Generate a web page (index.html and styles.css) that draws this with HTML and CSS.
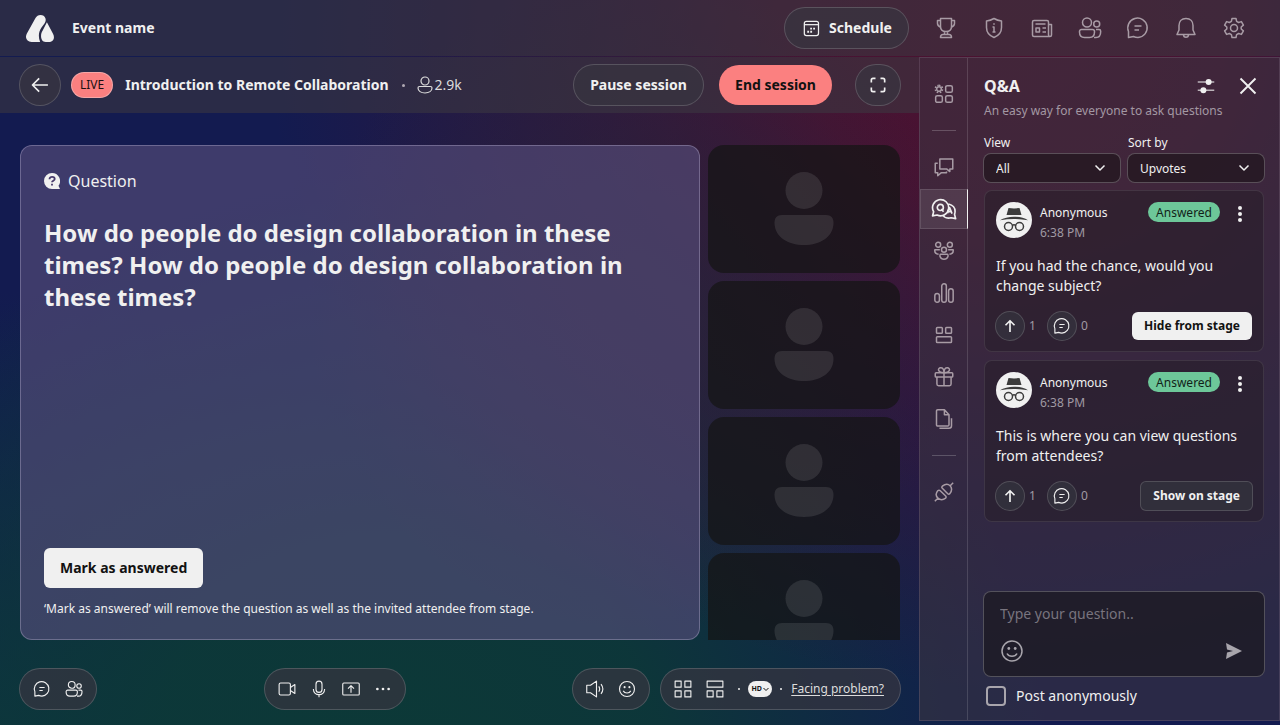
FILE: index.html
```html
<!DOCTYPE html>
<html lang="en">
<head>
    <meta charset="UTF-8">
    <meta name="viewport" content="width=device-width, initial-scale=1.0">
    <title>Event name</title>
    <link rel="stylesheet" href="styles.css">
</head>
<body>
    <!-- Shared icons -->
    <svg class="sprite" aria-hidden="true">
        <symbol id="i-chat" viewBox="0 0 24 24"><path d="M2.500 21.500v-6A9.700 9.700 0 1 1 12 21.500q-2.500 0-4.500-1Zm0 0M8.500 10h7M8.500 14H13"/></symbol>
        <symbol id="i-people" viewBox="0 0 24 24"><circle cx="9" cy="6.500" r="4.500"/><circle cx="18.700" cy="8" r="3"/><path d="M3.500 13.500h11a2 2 0 0 1 2 2v.5c0 3.500-2 5.500-5 5.500h-5c-3 0-5-2-5-5.500v-.5a2 2 0 0 1 2-2ZM18 13.500h3a1.700 1.700 0 0 1 1.700 1.700c0 4-1.500 6.300-4.700 6.300h-2"/></symbol>
        <symbol id="i-smile" viewBox="0 0 24 24"><circle cx="12" cy="12" r="10"/><path d="M7 14.500c2 3.800 8 3.800 10 0"/><circle class="dot" cx="8.800" cy="9.500" r="1.400"/><circle class="dot" cx="15.200" cy="9.500" r="1.400"/></symbol>
        <symbol id="i-up" viewBox="0 0 24 24"><path stroke-width="2.200" d="M12 20V5M6 11l6-6 6 6"/></symbol>
        <symbol id="i-person" viewBox="0 0 96 128"><circle cx="48" cy="45.500" r="18.500"/><path d="M26 70h44c5 0 7.500 3 7.500 7.500C77.500 92 64 100 48 100s-29.500-8-29.500-22.500C18.500 73 21 70 26 70Z"/></symbol>
        <symbol id="i-incognito" viewBox="0 0 36 36"><path class="dot" d="m12.500 6 5.500.5 5.500-.5 2 7h-15ZM4 18.300c7-4.700 21-4.700 28 0-9-1.700-19-1.700-28 0Z"/><circle cx="12.500" cy="24.500" r="4"/><circle cx="23.500" cy="24.500" r="4"/><path d="M16.300 23.500q1.700-1.400 3.400 0"/></symbol>
    </svg>

    <div class="app">
        <header class="topbar">
            <svg class="logo" viewBox="0 0 28 27"><path d="M14.500 0c2.600 0 4 1.200 4.800 3 .8 2 .4 3.600-.8 5.400L15.500 12.500c-3 4.200-3.400 9.500-1.400 14.500H5.500C.8 27-1.400 22.800.9 18.500L9.500 3C10.800.9 12.200 0 14.500 0Z"/><path d="M20.900 7.200 27 18.800c2.300 4.200.2 8.200-4.300 8.200h-3c-5.200 0-5.800-7.500-3-11.500Z"/></svg>
            <span class="event-name">Event name</span>
            <button class="pill schedule">
                <svg class="icon" viewBox="0 0 24 24"><rect x="4" y="4" width="17" height="17" rx="2.500"/><path d="M4 8h17"/><path stroke-width="2.200" stroke-dasharray="2.200 1.400" d="M11 12.700h7M7.500 16.500h7"/></svg>
                Schedule
            </button>
            <nav class="top-icons">
                <button aria-label="Leaderboard"><svg class="icon" viewBox="0 0 24 24"><path d="M6.500 2.500h11v8c0 3-2 5-5.500 5s-5.500-2-5.500-5ZM6.500 4.500h-3v3c0 2 1 3 3.500 4M17.500 4.500h3v3c0 2-1 3-3.500 4M10.500 15.500v3h3v-3M6.500 21.500c0-2 1-3 2.500-3h6c1.500 0 2.500 1 2.500 3Z"/></svg></button>
                <button aria-label="Info"><svg class="icon" viewBox="0 0 24 24"><path d="M12 2.500c2.500 1.500 5 2.200 7.500 2.500v6.500c0 5-2.500 8-7.500 10-5-2-7.500-5-7.500-10V5c2.500-.3 5-1 7.500-2.500ZM10.500 11H12v5m-1.500 0h3M12 7.200v1.600"/></svg></button>
                <button aria-label="News"><svg class="icon" viewBox="0 0 24 24"><path d="M20 20.500H4A1.500 1.500 0 0 1 2.500 19V6A1.500 1.500 0 0 1 4 4.500h13A1.500 1.500 0 0 1 18.500 6v13a1.500 1.500 0 0 0 3 0V8.500h-3M5.500 8h10M12.500 12h3.500M12.500 16h3.500M6 12h3.500v4H6Z"/></svg></button>
                <button aria-label="People"><svg class="icon"><use href="#i-people"/></svg></button>
                <button aria-label="Messages"><svg class="icon"><use href="#i-chat"/></svg></button>
                <button aria-label="Notifications"><svg class="icon" viewBox="0 0 24 24"><path d="M12 2.500c-4.500 0-7 3-7 7V14l-2 4.500h18L19 14V9.500c0-4-2.500-7-7-7ZM9.500 18.500c0 3.800 5 3.800 5 0"/></svg></button>
                <button aria-label="Settings"><svg class="icon" viewBox="0 0 24 24"><circle cx="12" cy="12" r="3.500"/><path d="M10 2.500h4l.6 2.900 2 1.100 2.800-.9 2 3.500-2.200 1.900v2l2.200 1.900-2 3.500-2.800-.9-2 1.100-.6 2.900h-4l-.6-2.900-2-1.100-2.800.9-2-3.500L4.800 13v-2L2.600 9.100l2-3.500 2.800.9 2-1.100Z"/></svg></button>
            </nav>
        </header>

        <div class="layout">
            <main class="stage">
                <div class="session-bar">
                    <button class="pill round" aria-label="Back"><svg class="icon" viewBox="0 0 24 24"><path stroke-width="2" d="M21.500 12h-18M11 4l-8 8 8 8"/></svg></button>
                    <span class="live">LIVE</span>
                    <h1>Introduction to Remote Collaboration</h1>
                    <span class="sep"></span>
                    <span class="viewers"><svg viewBox="0 0 16 18"><circle cx="8" cy="5" r="4"/><path d="M2.500 10.500h11c1 0 1.500.6 1.500 1.500 0 3-3 5-7 5s-7-2-7-5c0-.9.500-1.500 1.500-1.500Z"/></svg>2.9k</span>
                    <button class="pill pause">Pause session</button>
                    <button class="end">End session</button>
                    <button class="pill full" aria-label="Full screen"><svg class="icon" viewBox="0 0 24 24"><path stroke-width="2" d="M4 9V6q0-2 2-2h3M15 4h3q2 0 2 2v3M20 15v3q0 2-2 2h-3M9 20H6q-2 0-2-2v-3"/></svg></button>
                </div>

                <div class="content">
                    <section class="question">
                        <div class="kind">
                            <svg viewBox="0 0 16 16"><path d="M8 0a8 8 0 0 1 6.500 12.700L16 16H8A8 8 0 0 1 8 0Z"/><path class="mark" d="M5.500 6.200C5.500 3 10.700 3.200 10.700 6c0 1.700-2.700 1.700-2.700 3.300M8 10.800v1.800"/></svg>
                            Question
                        </div>
                        <h2>How do people do design collaboration in these times? How do people do design collaboration in these times?</h2>
                        <button class="mark-btn">Mark as answered</button>
                        <p>‘Mark as answered’ will remove the question as well as the invited attendee from stage.</p>
                    </section>
                    <div class="videos">
                        <div class="video"><svg><use href="#i-person"/></svg></div>
                        <div class="video"><svg><use href="#i-person"/></svg></div>
                        <div class="video"><svg><use href="#i-person"/></svg></div>
                        <div class="video"><svg><use href="#i-person"/></svg></div>
                    </div>
                </div>

                <footer class="controls">
                    <div class="pill group">
                        <button aria-label="Chat"><svg class="icon"><use href="#i-chat"/></svg></button>
                        <button aria-label="Attendees"><svg class="icon"><use href="#i-people"/></svg></button>
                    </div>
                    <div class="pill group">
                        <button aria-label="Camera"><svg class="icon" viewBox="0 0 24 24"><rect x="1.500" y="4" width="15" height="16" rx="2"/><path d="m16.500 10 6-4v12l-6-4"/></svg></button>
                        <button aria-label="Microphone"><svg class="icon" viewBox="0 0 24 24"><rect x="8" y="1.500" width="8" height="15" rx="4"/><path d="M4.500 12c0 10 15 10 15 0M12 19.500V23"/></svg></button>
                        <button aria-label="Share screen"><svg class="icon" viewBox="0 0 24 24"><rect x="1" y="4" width="22" height="16" rx="1.500"/><path d="M12 17V8M8 11.500 12 7.500l4 4"/></svg></button>
                        <button aria-label="More"><svg class="icon" viewBox="0 0 24 24"><circle class="dot" cx="4.500" cy="12" r="1.800"/><circle class="dot" cx="12" cy="12" r="1.800"/><circle class="dot" cx="19.500" cy="12" r="1.800"/></svg></button>
                    </div>
                    <div class="right-controls">
                        <div class="pill group">
                            <button aria-label="Sound"><svg class="icon" viewBox="0 0 24 24"><path d="M1 7h5l8-5.500v21L6 17H1ZM17 8.500q2.500 3.500 0 7M20 5.500q5 6.500 0 13"/></svg></button>
                            <button aria-label="Reactions"><svg class="icon"><use href="#i-smile"/></svg></button>
                        </div>
                        <div class="pill group wide">
                            <button aria-label="Grid view"><svg class="icon" viewBox="0 0 24 24"><path d="M1.500 1.500h8v8h-8ZM14.500 1.500h8v8h-8ZM1.500 14.500h8v8h-8ZM14.500 14.500h8v8h-8Z"/></svg></button>
                            <button aria-label="Stage view"><svg class="icon" viewBox="0 0 24 24"><path d="M1.500 1.500h21v8h-21ZM1.500 14.500h8v8h-8ZM14.500 14.500h8v8h-8Z"/></svg></button>
                            <span class="sep"></span>
                            <button class="hd">HD<svg viewBox="0 0 6 6"><path d="m.5 2 2.500 2.500L5.500 2"/></svg></button>
                            <span class="sep"></span>
                            <a href="#">Facing problem?</a>
                        </div>
                    </div>
                </footer>
            </main>

            <aside class="side">
                <nav class="rail">
                    <button aria-label="Widgets"><svg class="icon" viewBox="0 0 24 24"><circle cx="6" cy="6" r="2.800"/><path stroke-width="2" stroke-dasharray="1.800 1.600" d="M6 1.700a4.300 4.300 0 1 1-.1 0"/><rect x="14" y="2" width="8" height="8" rx="2"/><rect x="2" y="14" width="8" height="8" rx="2"/><rect x="14" y="14" width="8" height="8" rx="2"/></svg></button>
                    <hr>
                    <button aria-label="Chat"><svg class="icon" viewBox="0 0 24 24"><path d="M7 2.500h15.500v12H19v3L15.500 14.500H7ZM4.500 7.500h-3v11.500h3V22.500L8.500 19H15v-1.500"/></svg></button>
                    <button class="active" aria-label="Q&amp;A"><svg class="icon" viewBox="0 0 28 24"><path d="M1.500 19.500 2.700 15A8.800 8.800 0 1 1 6.500 18.500ZM19 6.500c4.500 1 7.500 4.500 7 9l-.5 2.500 1.200 4.500-5-1c-3.500 1-7.500 0-9.200-3"/><circle cx="10" cy="10.300" r="3.300"/><path d="m11 12 2.500 3M17.800 16.500l2.300-6 2.700 6.500M19 14.800h3"/></svg></button>
                    <button aria-label="Groups"><svg class="icon" viewBox="0 0 24 24"><circle cx="5" cy="4.500" r="3"/><circle cx="19" cy="4.500" r="3"/><circle cx="12" cy="10.500" r="3"/><path d="M8 16h8c1.500 0 1.500 6-4 6s-5.500-6-4-6ZM5.500 16c-3-.5-5-2-4.500-5.500h6M18.500 16c3-.5 5-2 4.500-5.500h-6"/></svg></button>
                    <button aria-label="Polls"><svg class="icon" viewBox="0 0 24 24"><rect x="1" y="12.500" width="5.500" height="10.500" rx="2.700"/><rect x="9.300" y="1" width="5.500" height="22" rx="2.700"/><rect x="17.500" y="7" width="5.500" height="16" rx="2.700"/></svg></button>
                    <button aria-label="Rooms"><svg class="icon" viewBox="0 0 24 24"><rect x="3" y="3" width="7" height="7" rx="1"/><rect x="14" y="3" width="7" height="7" rx="1"/><rect x="3" y="14" width="18" height="7" rx="1"/></svg></button>
                    <button aria-label="Prizes"><svg class="icon" viewBox="0 0 24 24"><rect x="1.500" y="7" width="21" height="5" rx="1"/><path d="M3.500 12v8.500q0 2 2 2h13q2 0 2-2V12M12 7v15M12 7C4 7 4 1 8 1c3 0 4 3 4 6ZM12 7c8 0 8-6 4-6-3 0-4 3-4 6Z"/></svg></button>
                    <button aria-label="Files"><svg class="icon" viewBox="0 0 24 24"><path d="M4.500 1h8L18 7v12q0 1.500-1.500 1.500h-12Q3 20.500 3 19V2.500Q3 1 4.500 1ZM12.500 1v6H18M6.500 23H18q3 0 3-3v-9"/></svg></button>
                    <hr>
                    <button aria-label="Integrations"><svg class="icon" viewBox="0 0 24 24"><path d="m1 23 3.500-3.500M19.500 4.500 23 1M4.500 10.500q-4 5 .2 8.800t9.300 0q1-1.300 0-2.500L7.500 10.500q-1.500-1.500-3 0ZM10 5q5.500-4.500 9.300-.5T19 14q-1.300 1.200-2.500 0L10 7.500Q8.800 6.200 10 5Z"/></svg></button>
                </nav>

                <section class="panel">
                    <div class="panel-head">
                        <h2>Q&amp;A</h2>
                        <button aria-label="Filters"><svg class="icon" viewBox="0 0 24 24"><path stroke-width="2" d="M1 6.500h22M1 17.500h22" opacity=".7"/><circle class="dot" cx="15.500" cy="6.500" r="4"/><circle class="dot" cx="8.500" cy="17.500" r="4"/></svg></button>
                        <button aria-label="Close"><svg class="icon" viewBox="0 0 24 24"><path stroke-width="2.500" d="m2 2 20 20M22 2 2 22"/></svg></button>
                    </div>
                    <p class="sub">An easy way for everyone to ask questions</p>
                    <div class="filters">
                        <div>
                            <label for="view">View</label>
                            <div class="select"><select id="view"><option>All</option><option>Answered</option></select><svg viewBox="0 0 12 8"><path d="m1.500 1.500 4.500 4.500 4.500-4.500"/></svg></div>
                        </div>
                        <div>
                            <label for="sort">Sort by</label>
                            <div class="select"><select id="sort"><option>Upvotes</option><option>Newest</option></select><svg viewBox="0 0 12 8"><path d="m1.500 1.500 4.500 4.500 4.500-4.500"/></svg></div>
                        </div>
                    </div>

                    <div class="list">
                        <article class="card">
                            <div class="who">
                                <svg class="avatar"><use href="#i-incognito"/></svg>
                                <div class="name">Anonymous<time>6:38 PM</time></div>
                                <span class="badge">Answered</span>
                                <button class="kebab" aria-label="More"><i></i><i></i><i></i></button>
                            </div>
                            <p>If you had the chance, would you change subject?</p>
                            <div class="actions">
                                <button class="mini" aria-label="Upvote"><svg class="icon"><use href="#i-up"/></svg></button><span>1</span>
                                <button class="mini" aria-label="Replies"><svg class="icon"><use href="#i-chat"/></svg></button><span>0</span>
                                <button class="hide-btn">Hide from stage</button>
                            </div>
                        </article>
                        <article class="card">
                            <div class="who">
                                <svg class="avatar"><use href="#i-incognito"/></svg>
                                <div class="name">Anonymous<time>6:38 PM</time></div>
                                <span class="badge">Answered</span>
                                <button class="kebab" aria-label="More"><i></i><i></i><i></i></button>
                            </div>
                            <p>This is where you can view questions from attendees?</p>
                            <div class="actions">
                                <button class="mini" aria-label="Upvote"><svg class="icon"><use href="#i-up"/></svg></button><span>1</span>
                                <button class="mini" aria-label="Replies"><svg class="icon"><use href="#i-chat"/></svg></button><span>0</span>
                                <button class="show-btn">Show on stage</button>
                            </div>
                        </article>
                    </div>

                    <div class="ask">
                        <textarea rows="1" placeholder="Type your question.." aria-label="Your question"></textarea>
                        <div class="ask-tools">
                            <button aria-label="Emoji"><svg class="icon"><use href="#i-smile"/></svg></button>
                            <button class="send" aria-label="Send"><svg viewBox="0 0 18 18"><path class="dot" d="M1 1l16 8-16 8 1-6.500L8 9 2 7.500Z"/></svg></button>
                        </div>
                    </div>
                    <label class="anon"><input type="checkbox">Post anonymously</label>
                </section>
            </aside>
        </div>
    </div>
</body>
</html>
```
FILE: styles.css
```css
* {
    box-sizing: border-box;
}

body {
    margin: 0;
    font-family: "Noto Sans", "Open Sans", sans-serif;
    font-size: 14px;
    line-height: 20px;
    color: #f0f0f0;
    background:
        radial-gradient(ellipse 26% 45% at 50% 42%, rgba(40, 38, 56, 0.7) 0%, rgba(40, 38, 56, 0.4) 50%, rgba(40, 38, 56, 0) 100%),
        radial-gradient(ellipse 58% 90% at 79% 5%, #4c1230 0%, rgba(76, 18, 48, 0.9) 28%, rgba(70, 20, 48, 0.5) 60%, rgba(60, 20, 60, 0) 100%),
        radial-gradient(ellipse 50% 85% at 32% 108%, #0c3937 0%, rgba(12, 57, 55, 0.9) 40%, rgba(12, 57, 55, 0) 100%),
        radial-gradient(ellipse 40% 60% at 0% 100%, rgba(12, 53, 64, 0.9) 0%, rgba(12, 53, 64, 0) 100%),
        #131b50;
}

h1, h2, p {
    margin: 0;
}

button {
    padding: 0;
    border: none;
    background: none;
    color: inherit;
    font: inherit;
    cursor: pointer;
}

svg {
    display: block;
    flex: none;
    fill: none;
    stroke: currentColor;
    stroke-width: 1.5;
    stroke-linejoin: round;
}

.sprite {
    display: none;
}

.dot {
    fill: currentColor;
    stroke: none;
}

.app {
    display: flex;
    flex-direction: column;
    height: 100vh;
}

.pill {
    display: flex;
    align-items: center;
    justify-content: center;
    height: 42px;
    border: 1px solid rgba(240, 240, 240, 0.18);
    border-radius: 21px;
    background-color: rgba(56, 52, 64, 0.7);
    font-weight: 700;
}

/* Top bar */
.topbar {
    display: flex;
    align-items: center;
    height: 56px;
    padding: 0 34px 0 26px;
    background-color: rgba(60, 56, 65, 0.57);
}

.logo {
    width: 28px;
    height: 27px;
    margin-right: 18px;
    fill: #f0f0f0;
    stroke: none;
}

.event-name {
    font-weight: 700;
}

.schedule {
    gap: 8px;
    width: 125px;
    margin-left: auto;
}

.schedule .icon {
    width: 20px;
    height: 20px;
}

.top-icons {
    display: flex;
    gap: 24px;
    margin-left: 25px;
    color: #a89ba5;
}

.top-icons .icon {
    width: 24px;
    height: 24px;
}

.layout {
    display: grid;
    grid-template-columns: minmax(0, 1fr) 361px;
    flex: 1;
    min-height: 0;
    margin-top: 1px;
}

/* Stage */
.stage {
    display: flex;
    flex-direction: column;
    min-height: 0;
}

.session-bar {
    display: flex;
    align-items: center;
    height: 56px;
    padding: 0 18px 0 19px;
    background-color: rgba(60, 56, 65, 0.57);
}

.round {
    width: 42px;
}

.session-bar .icon {
    width: 20px;
    height: 20px;
}

.live {
    margin: 0 12px 0 10px;
    padding: 2px 8px;
    border: 1px solid rgba(240, 240, 240, 0.35);
    border-radius: 13px;
    background-color: #fb8080;
    color: #1a1012;
    font-size: 12px;
}

.session-bar h1 {
    font-size: 14px;
    font-weight: 700;
}

.sep {
    width: 3px;
    height: 3px;
    border-radius: 50%;
    background-color: #b0a9b3;
}

.session-bar .sep {
    margin: 0 12px 0 13px;
}

.viewers {
    display: flex;
    align-items: center;
    gap: 2px;
    color: #dcdcdc;
}

.viewers svg {
    width: 16px;
    height: 18px;
    stroke-width: 1.2;
}

.pause {
    width: 131px;
    margin-left: auto;
}

.end {
    width: 113px;
    height: 40px;
    margin: 0 23px 0 15px;
    border-radius: 20px;
    background-color: #fb8080;
    color: #121212;
    font-weight: 700;
}

.full {
    width: 46px;
}

.content {
    display: grid;
    grid-template-columns: minmax(0, 1fr) 192px;
    gap: 8px;
    flex: 1;
    min-height: 0;
    padding: 32px 19px 0 20px;
}

.question {
    display: flex;
    flex-direction: column;
    align-items: flex-start;
    padding: 23px 23px 20px;
    border: 1px solid rgba(220, 210, 240, 0.3);
    border-radius: 12px;
    background-color: rgba(87, 77, 124, 0.63);
}

.kind {
    display: flex;
    align-items: center;
    gap: 8px;
    line-height: 24px;
    font-size: 16px;
}

.kind svg {
    width: 16px;
    height: 16px;
    fill: #f0f0f0;
    stroke: none;
}

.kind .mark {
    fill: none;
    stroke: #46396b;
    stroke-width: 1.8;
}

.question h2 {
    max-width: 600px;
    margin: 24px 0 auto;
    font-size: 24px;
    line-height: 32px;
    font-weight: 700;
}

.mark-btn {
    height: 40px;
    padding: 0 16px;
    border-radius: 6px;
    background-color: #f0f0f0;
    color: #121212;
    font-weight: 700;
}

.question p {
    margin-top: 11px;
    font-size: 12px;
    line-height: 20px;
}

.videos {
    display: flex;
    flex-direction: column;
    gap: 8px;
    overflow: hidden;
}

.video {
    display: flex;
    flex: none;
    justify-content: center;
    height: 128px;
    border-radius: 16px;
    background-color: rgba(21, 20, 21, 0.73);
}

.video svg {
    width: 96px;
    height: 128px;
    fill: rgba(240, 240, 240, 0.11);
    stroke: none;
}

/* Bottom controls */
.controls {
    display: flex;
    justify-content: space-between;
    padding: 28px 18px 15px 19px;
}

.group {
    gap: 14px;
    padding: 0 13px;
}

.group .icon {
    width: 18px;
    height: 18px;
}

.right-controls {
    display: flex;
    gap: 10px;
}

.wide {
    padding-right: 16px;
}

.wide .sep {
    width: 2px;
    height: 2px;
    background-color: #f0f0f0;
}

.hd {
    display: flex;
    align-items: center;
    justify-content: center;
    gap: 1px;
    width: 24px;
    height: 16px;
    margin: 0 -6px;
    border-radius: 8px;
    background-color: #f0f0f0;
    color: #121212;
    font-size: 7px;
    font-weight: 700;
}

.hd svg {
    width: 6px;
    height: 6px;
    stroke-width: 1;
}

.wide a {
    margin-left: -5px;
    color: #dcdcdc;
    font-size: 12px;
    font-weight: 400;
    text-underline-offset: 2px;
}

/* Side panel */
.side {
    display: flex;
    margin-bottom: 4px;
    border: 1px solid rgba(150, 130, 150, 0.25);
    background-color: rgba(60, 52, 65, 0.57);
}

.rail {
    display: flex;
    flex-direction: column;
    gap: 2px;
    width: 48px;
    padding-top: 16px;
    border-right: 1px solid rgba(240, 240, 240, 0.15);
    color: #a89ba5;
}

.rail button {
    display: flex;
    align-items: center;
    justify-content: center;
    height: 40px;
    border: 1px solid transparent;
}

.rail .active {
    border-color: rgba(240, 240, 240, 0.12);
    background-color: rgba(240, 240, 240, 0.1);
    color: #f0f0f0;
    margin-right: -1px;
    border-right: 1px solid #f0f0f0;
}

.rail .icon {
    width: 20px;
    height: 20px;
    stroke-width: 1.8;
}

.rail .active .icon {
    width: 26px;
    height: 22px;
}

.rail hr {
    width: 24px;
    height: 1px;
    margin: 14px auto;
    border: none;
    background-color: rgba(240, 240, 240, 0.22);
}

.panel {
    display: flex;
    flex: 1;
    flex-direction: column;
    min-width: 0;
    padding: 16px 14px 14px 15px;
}

.panel-head {
    display: flex;
    align-items: center;
    padding: 0 8px 0 1px;
}

.panel-head h2 {
    margin-right: auto;
    font-size: 16px;
    line-height: 24px;
    font-weight: 700;
}

.panel-head button {
    margin-left: 24px;
}

.panel-head .icon {
    width: 18px;
    height: 18px;
}

.sub {
    margin: 3px 1px 12px;
    color: #a398a3;
    font-size: 12px;
}

.filters {
    display: grid;
    grid-template-columns: 1fr 1fr;
    gap: 6px;
    font-size: 12px;
}

.filters label {
    display: block;
    margin: 0 1px;
}

.select {
    position: relative;
}

.select select {
    display: block;
    width: 100%;
    height: 30px;
    padding: 1px 12px 0;
    border: 1px solid rgba(240, 240, 240, 0.25);
    border-radius: 8px;
    background-color: rgba(32, 22, 28, 0.7);
    color: #f0f0f0;
    font: inherit;
    appearance: none;
}

.select svg {
    position: absolute;
    top: 11px;
    right: 15px;
    width: 12px;
    height: 8px;
    pointer-events: none;
}

.list {
    display: flex;
    flex-direction: column;
    gap: 8px;
    flex: 1;
    min-height: 0;
    margin: 7px 1px 0;
    overflow: hidden;
}

.card {
    flex: none;
    padding: 11px 11px 10px;
    border: 1px solid rgba(240, 240, 240, 0.1);
    border-radius: 8px;
    background-color: rgba(38, 30, 40, 0.55);
}

.who {
    display: flex;
    align-items: flex-start;
    font-size: 12px;
}

.avatar {
    width: 36px;
    height: 36px;
    margin-right: 8px;
    border-radius: 50%;
    background-color: #f0f0f0;
    color: #3c3c3c;
}

.name {
    flex: 1;
    padding-top: 1px;
}

.name time {
    display: block;
    color: #a09aa3;
}

.badge {
    height: 20px;
    padding: 1px 8px 0;
    border-radius: 10px;
    background-color: #6dc799;
    color: #121f19;
}

.kebab {
    display: flex;
    flex-direction: column;
    gap: 2px;
    margin: 4px 10px 0 18px;
}

.kebab i {
    width: 4px;
    height: 4px;
    border-radius: 50%;
    background-color: #f0f0f0;
}

.card p {
    margin: 13px 0 15px;
}

.actions {
    display: flex;
    align-items: center;
    height: 30px;
    margin-left: -1px;
    color: #a09aa3;
    font-size: 12px;
}

.actions span {
    width: 18px;
    margin-left: 4px;
}

.mini {
    display: flex;
    align-items: center;
    justify-content: center;
    width: 30px;
    height: 30px;
    border: 1px solid rgba(240, 240, 240, 0.16);
    border-radius: 50%;
    background-color: rgba(52, 52, 62, 0.7);
    color: #f0f0f0;
}

.mini .icon {
    width: 18px;
    height: 18px;
}

.hide-btn, .show-btn {
    height: 28px;
    margin-left: auto;
    padding: 0 12px;
    border-radius: 6px;
    background-color: #f0f0f0;
    color: #121212;
    font-weight: 700;
}

.show-btn {
    height: 30px;
    margin-right: -1px;
    border: 1px solid rgba(240, 240, 240, 0.16);
    background-color: rgba(52, 52, 62, 0.7);
    color: #f0f0f0;
}

.ask {
    padding: 12px 16px 13px;
    border: 1px solid rgba(240, 240, 240, 0.25);
    border-radius: 8px;
    background-color: rgba(28, 26, 34, 0.75);
}

.ask textarea {
    display: block;
    width: 100%;
    height: 20px;
    padding: 0;
    border: none;
    outline: none;
    background: none;
    color: #f0f0f0;
    font: inherit;
    resize: none;
    overflow: hidden;
}

.ask textarea::placeholder {
    color: #78747e;
}

.ask-tools {
    display: flex;
    justify-content: space-between;
    align-items: center;
    margin-top: 15px;
    color: #a8a5ac;
}

.ask-tools .icon {
    width: 24px;
    height: 24px;
}

.send svg {
    width: 18px;
    height: 18px;
    margin-right: 5px;
}

.anon {
    display: flex;
    align-items: center;
    gap: 10px;
    margin: 9px 3px 0;
}

.anon input {
    width: 20px;
    height: 20px;
    margin: 0;
    border: 2px solid #a8a5ac;
    border-radius: 4px;
    appearance: none;
}

.anon input:checked {
    background-color: #a8a5ac;
}
```
